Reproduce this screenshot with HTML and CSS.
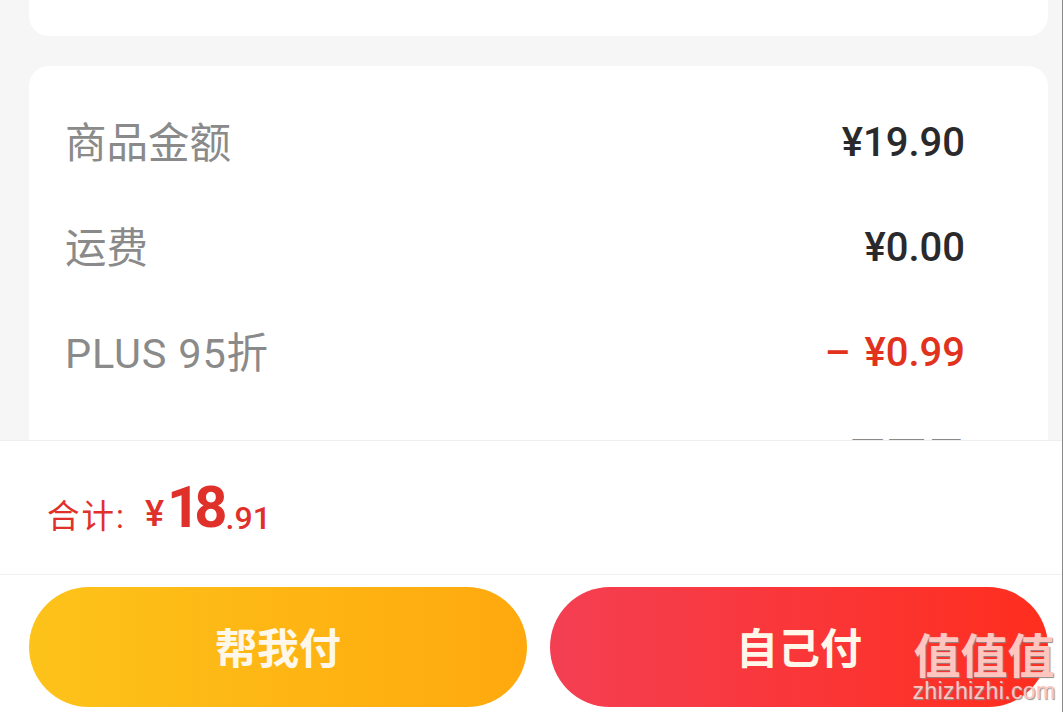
FILE: index.html
```html
<!DOCTYPE html>
<html lang="zh-CN">

<head>
  <meta charset="UTF-8" />
  <meta name="viewport" content="width=device-width, initial-scale=1.0" />
  <title>订单支付</title>
  <link rel="stylesheet" href="styles.css">
</head>

<body>
  <div class="page">
    <!-- Order detail, cut off by the footer -->
    <div class="order-scroll">
      <div class="card card-top"></div>
      <div class="card card-price">
        <div class="price-row">
          <span class="row-label">商品金额</span>
          <span class="row-value">¥19.90</span>
        </div>
        <div class="price-row">
          <span class="row-label">运费</span>
          <span class="row-value">¥0.00</span>
        </div>
        <div class="price-row">
          <span class="row-label plus">PLUS 95折</span>
          <span class="row-value discount">– ¥0.99</span>
        </div>
        <div class="price-row">
          <span class="row-label clipped">优惠券</span>
          <span class="row-value muted">无可用</span>
        </div>
      </div>
    </div>

    <!-- Footer -->
    <div class="pay-footer">
      <div class="total-bar">
        <span class="total-label">合计:</span>
        <span class="total-yen">¥</span>
        <span class="total-int">18</span>
        <span class="total-dec">.91</span>
      </div>
      <div class="pay-actions">
        <button class="pay-btn pay-friend">帮我付</button>
        <button class="pay-btn pay-self">自己付</button>
      </div>
    </div>

    <!-- Site watermark -->
    <div class="watermark">
      <div class="watermark-mark">值值值</div>
      <div class="watermark-url">zhizhizhi.com</div>
    </div>
  </div>
</body>

</html>
```

FILE: styles.css
```css
/* Reset default styles */
* {
  margin: 0;
  padding: 0;
  box-sizing: border-box;
  font-family: Roboto, 'Noto Sans CJK SC', sans-serif;
}

body {
  background-color: #f6f6f6;
  overflow: hidden;
}

.page {
  position: relative;
  width: 1063px;
  height: 712px;
  border-right: 1px solid #8a8a8a;
  overflow: hidden;
  display: flex;
  flex-direction: column;
}

/* Order detail */
.order-scroll {
  height: 440px;
  overflow: hidden;
  padding: 0 14px 0 29px;
  display: flex;
  flex-direction: column;
  gap: 30px;
  flex-shrink: 0;
}

.card {
  background-color: #ffffff;
  flex-shrink: 0;
}

.card-top {
  height: 36px;
  border-radius: 0 0 20px 20px;
}

.card-price {
  border-radius: 20px 20px 0 0;
  padding: 25px 83px 0 36px;
}

.price-row {
  height: 105px;
  display: flex;
  justify-content: space-between;
  align-items: center;
}

.row-label {
  font-size: 41.5px;
  color: #8a8a8a;
  margin-top: -8px;
}

.row-label.plus {
  letter-spacing: 0.8px;
}

.row-label.clipped {
  margin-top: 2px;
}

.row-value {
  font-size: 40px;
  font-weight: 500;
  color: #2a2a2c;
  margin-top: -2px;
}

.row-value.discount {
  color: #e0321c;
  word-spacing: 4px;
}

.row-value.muted {
  font-size: 39px;
  font-weight: 400;
  color: #8a8a8a;
  margin-top: -13px;
}

/* Footer */
.pay-footer {
  flex: 1;
  background-color: #ffffff;
  border-top: 1px solid #efefef;
}

.total-bar {
  height: 134px;
  padding: 12px 0 0 47px;
  border-bottom: 1px solid #f0f0f0;
  display: flex;
  align-items: center;
  color: #e0302a;
}

.total-label {
  font-size: 32.5px;
  letter-spacing: 2px;
  margin-right: 19px;
}

.total-yen {
  font-size: 36px;
  font-weight: 500;
  margin-right: 3px;
}

.total-int {
  font-size: 58px;
  font-weight: 700;
  letter-spacing: -6px;
  margin: -14px 4px 0 0;
}

.total-dec {
  font-size: 32px;
  font-weight: 500;
  margin-top: 8px;
}

.pay-actions {
  padding: 12px 14px 0 29px;
  display: flex;
  gap: 23px;
}

.pay-btn {
  flex: 1;
  height: 120px;
  border: none;
  border-radius: 60px;
  color: #fff8ea;
  font-size: 42px;
  font-weight: 700;
  padding-bottom: 4px;
}

.pay-friend {
  background: linear-gradient(90deg, #fdc31a, #ffa90e);
}

.pay-self {
  background: linear-gradient(90deg, #f43f53, #ff2e1e);
}

/* Watermark */
.watermark {
  position: absolute;
  left: 912px;
  top: 628px;
  width: 144px;
  text-align: center;
  color: #ffc6c0;
  text-shadow: 1px 1px 1px #8c8c8c;
}

.watermark-mark {
  font-family: 'Noto Sans CJK SC', sans-serif;
  font-size: 47px;
  font-weight: 700;
  line-height: 50px;
}

.watermark-url {
  font-family: 'Liberation Sans', sans-serif;
  font-size: 23px;
  letter-spacing: 0.4px;
  line-height: 25px;
  margin-top: 1px;
  white-space: nowrap;
}
```
